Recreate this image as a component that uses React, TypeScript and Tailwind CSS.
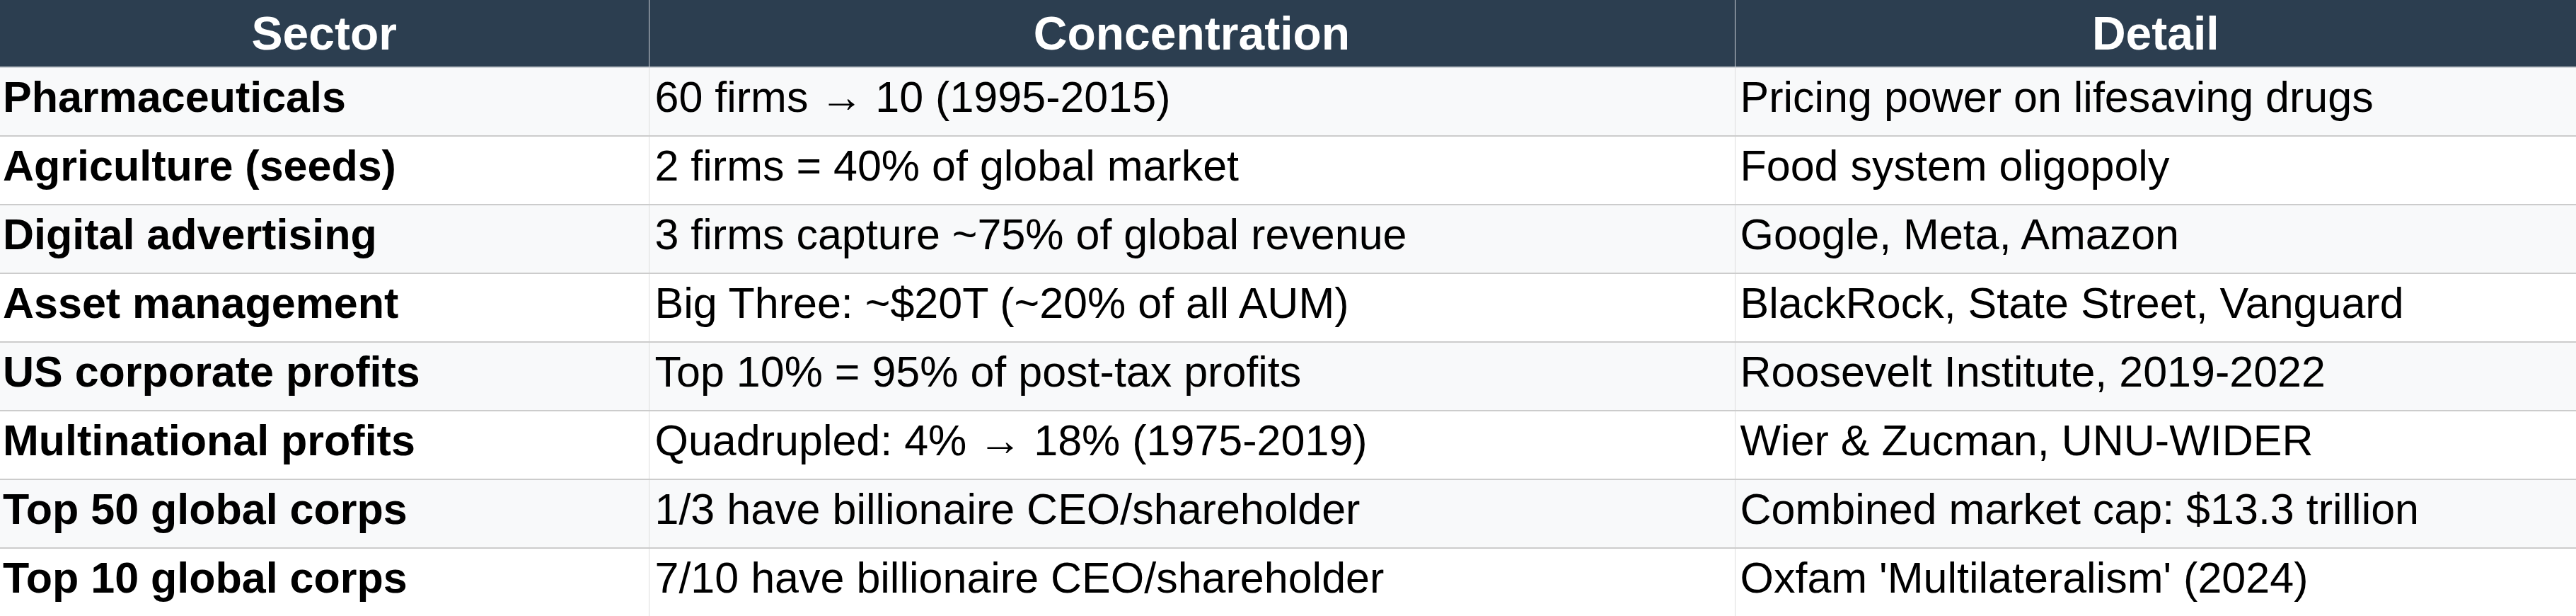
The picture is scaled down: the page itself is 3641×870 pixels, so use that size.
const rows = [
  ['Pharmaceuticals', '60 firms → 10 (1995-2015)', 'Pricing power on lifesaving drugs'],
  ['Agriculture (seeds)', '2 firms = 40% of global market', 'Food system oligopoly'],
  ['Digital advertising', '3 firms capture ~75% of global revenue', 'Google, Meta, Amazon'],
  ['Asset management', 'Big Three: ~$20T (~20% of all AUM)', 'BlackRock, State Street, Vanguard'],
  ['US corporate profits', 'Top 10% = 95% of post-tax profits', 'Roosevelt Institute, 2019-2022'],
  ['Multinational profits', 'Quadrupled: 4% → 18% (1975-2019)', 'Wier & Zucman, UNU-WIDER'],
  ['Top 50 global corps', '1/3 have billionaire CEO/shareholder', 'Combined market cap: $13.3 trillion'],
  ['Top 10 global corps', '7/10 have billionaire CEO/shareholder', "Oxfam 'Multilateralism' (2024)"],
];

export default function App() {
  return (
    <div className="w-[3641px] h-[870px] overflow-hidden bg-white font-['Liberation_Sans',Arial,sans-serif] text-black">
      <table className="w-full table-fixed border-collapse">
        <colgroup>
          <col className="w-[917px]" />
          <col className="w-[1535px]" />
          <col />
        </colgroup>
        <thead>
          <tr className="h-[95px] bg-[#2c3e50] text-white">
            <th className="border-b-2 border-r border-[#cfd3d8] align-top pt-[10px] text-center text-[66px] font-bold leading-[1.15]">Sector</th>
            <th className="border-b-2 border-r border-[#cfd3d8] align-top pt-[10px] text-center text-[66px] font-bold leading-[1.15]">Concentration</th>
            <th className="border-b-2 border-[#cfd3d8] align-top pt-[10px] text-center text-[66px] font-bold leading-[1.15]">Detail</th>
          </tr>
        </thead>
        <tbody>
          {rows.map((r, i) => (
            <tr key={i} className={i % 2 === 0 ? 'h-[97px] bg-[#f8f9fa]' : 'h-[97px] bg-white'}>
              <td className="border-b-2 border-r border-b-[#cccccc] border-r-[#dddddd] align-top pt-[6px] pl-[4px] text-[61px] font-bold leading-[1.15] whitespace-nowrap">
                {r[0]}
              </td>
              <td className="border-b-2 border-r border-b-[#cccccc] border-r-[#dddddd] align-top pt-[6px] pl-[8px] text-[61px] leading-[1.15] whitespace-nowrap">
                {r[1]}
              </td>
              <td className="border-b-2 border-b-[#cccccc] align-top pt-[6px] pl-[7px] text-[61px] leading-[1.15] whitespace-nowrap">
                {r[2]}
              </td>
            </tr>
          ))}
        </tbody>
      </table>
    </div>
  );
}
